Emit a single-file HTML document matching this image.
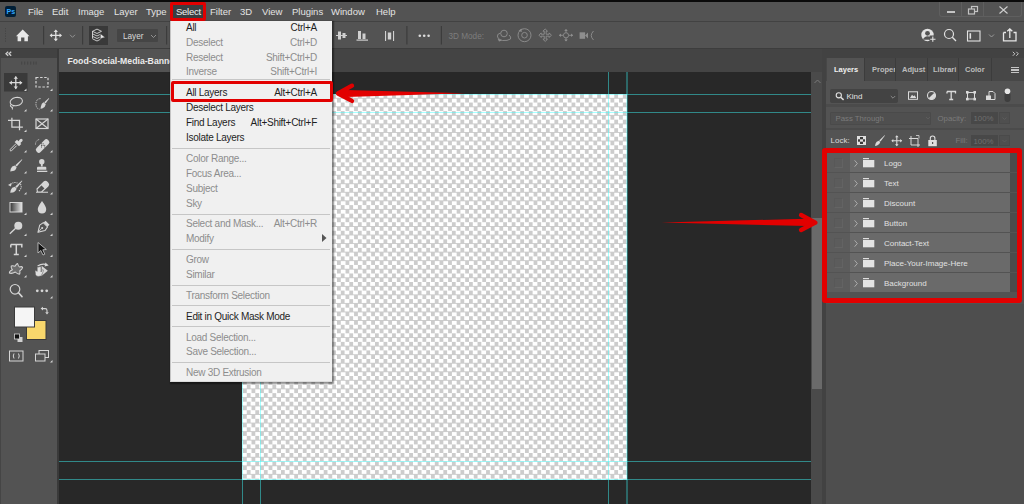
<!DOCTYPE html>
<html><head><meta charset="utf-8">
<style>
*{margin:0;padding:0;box-sizing:border-box}
html,body{width:1024px;height:504px;overflow:hidden;background:#282828;font-family:"Liberation Sans",sans-serif}
.a{position:absolute}
svg{position:absolute;overflow:visible}
#stage{position:relative;width:1024px;height:504px;overflow:hidden}
.mb{position:absolute;font-size:9.5px;color:#e4e4e4;top:6px;line-height:11px;white-space:nowrap}
#menu{position:absolute;left:170px;top:0;width:163px;height:383px}
.mi{position:absolute;left:16px;font-size:10px;line-height:12px;letter-spacing:-0.28px;color:#1e1e1e;white-space:nowrap;margin-top:0.4px}
.sc{position:absolute;right:16px;font-size:10px;line-height:12px;letter-spacing:-0.28px;color:#1e1e1e;white-space:nowrap;text-align:right;margin-top:0.4px}
.d{color:#8d8d8d}
.sep{position:absolute;left:2px;width:158px;height:1px;background:#c6c6c6}
.row{position:absolute;left:827px;width:190px;height:19px;background:#4b4b4b}
.row .v{position:absolute;left:0;top:0;width:23px;height:19px;background:#5c5c5c}
.row .v i{position:absolute;left:6.5px;top:5px;width:9.5px;height:9.5px;border:1px solid;border-color:#585858 #636363 #646464 #585858}
.row .n{position:absolute;left:23px;top:0;width:160px;height:19px;background:#6a6a6a}
.row .n span{position:absolute;left:34px;top:5.5px;font-size:8px;line-height:10px;color:#e0e0e0;white-space:nowrap}
.ptab{position:absolute;top:64.5px;font-size:7.5px;line-height:9px;font-weight:bold;color:#bdbdbd;white-space:nowrap}
.guideh{position:absolute;left:59px;width:752px;height:1px;background:rgba(60,255,255,0.45)}
.guidev{position:absolute;top:72px;height:432px;width:1px;background:rgba(60,255,255,0.45)}
</style></head><body><div id="stage">
<!-- top black strip -->
<div class="a" style="left:0;top:0;width:1024px;height:2px;background:#0a0a0a"></div>
<!-- menu bar -->
<div class="a" style="left:0;top:2px;width:1024px;height:19px;background:#535353"></div>
<div class="a" style="left:0;top:21px;width:1024px;height:1px;background:#424242"></div>
<!-- PS icon -->
<div class="a" style="left:5px;top:6px;width:11px;height:11px;background:#001e36;border-radius:2px"></div>
<div class="a" style="left:6.5px;top:7.5px;font-size:7px;line-height:8px;font-weight:bold;color:#31a8ff">Ps</div>
<div class="mb" style="left:28px">File</div>
<div class="mb" style="left:52px">Edit</div>
<div class="mb" style="left:78px">Image</div>
<div class="mb" style="left:114px">Layer</div>
<div class="mb" style="left:146px">Type</div>
<div class="mb" style="left:210px">Filter</div>
<div class="mb" style="left:240px">3D</div>
<div class="mb" style="left:262px">View</div>
<div class="mb" style="left:292px">Plugins</div>
<div class="mb" style="left:331px">Window</div>
<div class="mb" style="left:376px">Help</div>
<!-- window controls -->
<div class="a" style="left:939px;top:2px;width:83px;height:15px;border:1px solid #5f5f5f;border-top:none;border-radius:0 0 3px 3px"></div>
<div class="a" style="left:961px;top:2px;width:1px;height:14px;background:#5f5f5f"></div>
<div class="a" style="left:983px;top:2px;width:1px;height:14px;background:#5f5f5f"></div>
<div class="a" style="left:947px;top:11px;width:8px;height:2px;background:#c4c4c4"></div>
<svg style="left:968px;top:6px" width="11" height="9"><rect x="3.5" y="0.5" width="6" height="5" fill="none" stroke="#c4c4c4" stroke-width="1.2"/><rect x="0.5" y="3" width="6" height="5" fill="#535353" stroke="#c4c4c4" stroke-width="1.2"/></svg>
<svg style="left:999px;top:6px" width="9" height="8"><path d="M0.5 0.5L8.5 7.5M8.5 0.5L0.5 7.5" stroke="#cfcfcf" stroke-width="1.1"/></svg>

<!-- options bar -->
<div class="a" style="left:0;top:22px;width:1024px;height:26px;background:#535353"></div>
<div class="a" style="left:0;top:48px;width:1024px;height:1px;background:#3d3d3d"></div>

<!-- options bar icons -->
<svg style="left:0;top:0" width="1024" height="50">
<g fill="#454545"><rect x="5" y="28" width="1" height="1.2"/><rect x="5" y="30.5" width="1" height="1.2"/><rect x="5" y="33" width="1" height="1.2"/><rect x="5" y="35.5" width="1" height="1.2"/><rect x="5" y="38" width="1" height="1.2"/><rect x="5" y="40.5" width="1" height="1.2"/></g>
<!-- home -->
<path d="M22.7 29.5 L29.5 36.3 H27.9 V41.2 H24.4 V37.5 H21.1 V41.2 H17.6 V36.3 H16 Z" fill="#e8e8e8"/>
<g fill="#3c3c3c"><rect x="43" y="26" width="1.2" height="18.5"/><rect x="82" y="26" width="1.2" height="18.5"/><rect x="166" y="26" width="1.2" height="18.5"/><rect x="406.3" y="26" width="1.2" height="18.5"/><rect x="440.8" y="26" width="1.2" height="18.5"/></g>
<!-- move -->
<path d="M55.8 30.5V40.3 M50.5 35.4H61.1" stroke="#e0e0e0" stroke-width="1.3" fill="none"/>
<path d="M55.8 29.5L53.6 32H58Z M55.8 41.3L53.6 38.8H58Z M49.6 35.4L52.1 33.2V37.6Z M62 35.4L59.5 33.2V37.6Z" fill="#e0e0e0"/>
<path d="M70 34.8L72.5 37.3L75 34.8" fill="none" stroke="#9a9a9a" stroke-width="0.9"/>
<!-- auto select box -->
<rect x="89" y="26" width="19" height="19" fill="#393939"/>
<g fill="none" stroke="#d8d8d8" stroke-width="0.9">
<path d="M92.5 31.3 L97 29.1 L101.5 31.3 L97 33.5Z"/>
<path d="M92.5 33.8 L97 36 L100 34.5"/>
<path d="M92.5 36.3 L97 38.5 L99.8 37.1"/>
<path d="M92.5 38.8 L97 41 L100 39.5"/>
<path d="M92.5 31 V38.5"/>
</g>
<path d="M100.3 33.6 L105.2 37.4 L101.6 38.2 L100.3 40.3 Z" fill="#e6e6e6" stroke="#393939" stroke-width="0.5"/>
<!-- Layer dropdown -->
<rect x="117" y="29" width="41" height="13" rx="1" fill="#454545"/>
<path d="M151 35L153.5 37.5L156 35" fill="none" stroke="#9a9a9a" stroke-width="0.9"/>
<!-- align icons -->
<g fill="#d0d0d0">
<rect x="336" y="35" width="11" height="1"/><rect x="338" y="31.5" width="3" height="8"/><rect x="342.5" y="33" width="3" height="5"/>
<rect x="356.5" y="39.5" width="11.5" height="1.2"/><rect x="358" y="31" width="3" height="8"/><rect x="362.5" y="33.5" width="3" height="5.5"/>
<rect x="385" y="31" width="1.1" height="10"/><rect x="393" y="31" width="1.1" height="10"/><rect x="387.8" y="32.5" width="3.4" height="7"/>
</g>
<g fill="#dcdcdc"><circle cx="419.8" cy="35.8" r="1.3"/><circle cx="424.2" cy="35.8" r="1.3"/><circle cx="428.6" cy="35.8" r="1.3"/></g>
<!-- 3D icons -->
<g fill="none" stroke="#8e8e8e" stroke-width="0.9">
<circle cx="504" cy="33.5" r="3.3"/>
<path d="M500.5 33 q-4 1 -3 4 q1.5 3 5 3.5 q5 0.5 8 -1.5 q1 -2 -1.5 -4"/>
<circle cx="524.5" cy="35.2" r="6.5"/><circle cx="524.5" cy="35.2" r="2.8"/>
<path d="M544.25 31.20 L542.90 31.20 L545.20 29.00 L547.50 31.20 L546.15 31.20 L546.15 34.25 L549.20 34.25 L549.20 32.90 L551.40 35.20 L549.20 37.50 L549.20 36.15 L546.15 36.15 L546.15 39.20 L547.50 39.20 L545.20 41.40 L542.90 39.20 L544.25 39.20 L544.25 36.15 L541.20 36.15 L541.20 37.50 L539.00 35.20 L541.20 32.90 L541.20 34.25 L544.25 34.25Z"/>
<circle cx="566" cy="35.3" r="2.6"/>
<path d="M559 35.3 H563 M569 35.3 H573 M566 29.5 V32.5 M566 38 V41"/>
<path d="M593.5 31 Q589 35.5 593.5 40"/>
</g>
<g fill="#8e8e8e">
<path d="M497.5 38.5 L502 40.5 L499 41.5Z"/>
<path d="M518.5 31 L521.5 28.5 L521.8 32Z"/>
<path d="M559 35.3 L561 33.5 V37.1Z M573 35.3 L571 33.5 V37.1Z M566 29 L564.2 31 H567.8Z M566 41.5 L564.2 39.5 H567.8Z"/>
<rect x="579.6" y="32.3" width="5.5" height="6.5"/><path d="M585 35.5 L588 32.5 V38.5Z"/>
</g>
<text x="448.5" y="38.7" font-family="Liberation Sans" font-size="8.2" fill="#7d7d7d">3D Mode:</text>
<!-- right icons -->
<g fill="#e2e2e2">
<circle cx="927.5" cy="35" r="6.2"/>
</g>
<g fill="#535353"><circle cx="927.5" cy="33.3" r="2.4"/><path d="M922.8 39.8 q1.5 -3.5 4.7 -3.5 q3.2 0 4.7 3.5Z"/><rect x="929.5" y="35.5" width="7" height="7"/></g>
<path d="M932.8 36.5V41.8M930.2 39.2H935.5" stroke="#e2e2e2" stroke-width="1.1"/>
<circle cx="949" cy="34" r="4.5" fill="none" stroke="#e2e2e2" stroke-width="1.2"/>
<path d="M952.3 37.3L956 41" stroke="#e2e2e2" stroke-width="1.3"/>
<rect x="967.5" y="31" width="12.5" height="10" fill="none" stroke="#e2e2e2" stroke-width="1.1"/>
<rect x="969.5" y="33.2" width="1.6" height="5.5" fill="#e2e2e2"/>
<path d="M989 34.5L991.5 37L994 34.5" fill="none" stroke="#a0a0a0" stroke-width="0.9"/>
<path d="M1003.5 32.5 V40.8 H1016 V32.5 H1013.5 M1006 32.5 H1003.5 M1009.8 38 V29 M1007.3 31.3 L1009.8 28.8 L1012.3 31.3" fill="none" stroke="#e6e6e6" stroke-width="1.3"/>
</svg>
<div class="a" style="left:123px;top:32px;font-size:8.2px;line-height:9px;color:#d8d8d8">Layer</div>

<!-- toolbar -->
<div class="a" style="left:0;top:49px;width:57px;height:455px;background:#535353"></div>
<div class="a" style="left:0;top:49px;width:1px;height:455px;background:#454545"></div>
<div class="a" style="left:0;top:49px;width:57px;height:9px;background:#424242"></div>
<div class="a" style="left:57px;top:49px;width:2px;height:455px;background:#3a3a3a"></div>

<!-- toolbar icons -->
<svg style="left:0;top:0" width="60" height="504">
<g fill="#b5b5b5">

</g>
<path d="M8.2 51.8 L6 53.8 L8.2 55.8 M11.2 51.8 L9 53.8 L11.2 55.8" fill="none" stroke="#d0d0d0" stroke-width="1.3"/>
<g fill="#474747"><rect x="21" y="61.6" width="1.3" height="3"/><rect x="24" y="61.6" width="1.3" height="3"/><rect x="27" y="61.6" width="1.3" height="3"/><rect x="30" y="61.6" width="1.3" height="3"/><rect x="33" y="61.6" width="1.3" height="3"/><rect x="35.5" y="61.6" width="1.3" height="3"/></g>
<rect x="4" y="73" width="23.5" height="18.5" fill="#3a3a3a"/>
<g fill="#d6d6d6">
<!-- corner triangles -->
<path d="M26.5 88.5V91H24Z"/><path d="M52.5 88.5V91H50Z"/>
<path d="M26.5 109V111.5H24Z"/><path d="M52.5 109V111.5H50Z"/>
<path d="M26.5 129.5V132H24Z"/>
<path d="M26.5 150V152.5H24Z"/><path d="M52.5 150V152.5H50Z"/>
<path d="M26.5 171V173.5H24Z"/><path d="M52.5 171V173.5H50Z"/>
<path d="M26.5 192V194.5H24Z"/><path d="M52.5 192V194.5H50Z"/>
<path d="M26.5 212.5V215H24Z"/><path d="M52.5 212.5V215H50Z"/>
<path d="M26.5 233.5V236H24Z"/><path d="M52.5 233.5V236H50Z"/>
<path d="M26.5 254.5V257H24Z"/><path d="M52.5 254.5V257H50Z"/>
<path d="M26.5 275V277.5H24Z"/><path d="M52.5 275V277.5H50Z"/>
<path d="M52.5 296V298.5H50Z"/>
<path d="M52.5 360V362.5H50Z"/>
</g>
<g fill="none" stroke="#dadada" stroke-width="1.3" stroke-linecap="round" stroke-linejoin="round">
<!-- move -->
<path d="M15.8 77V88.5 M10 82.7H21.6"/>
</g>
<g fill="#dadada">
<path d="M15.8 76.3L13.6 78.8H18Z M15.8 89.1L13.6 86.6H18Z M9.4 82.7L11.9 80.5V84.9Z M22.2 82.7L19.7 80.5V84.9Z"/>
</g>
<g fill="none" stroke="#d6d6d6" stroke-width="1.2">
<!-- marquee dashed -->
<rect x="36" y="77.5" width="12" height="9.5" stroke-dasharray="2.5 1.6"/>
<!-- lasso -->
<ellipse cx="16.3" cy="101.6" rx="6.2" ry="4.1" transform="rotate(-12 16.3 101.6)" stroke-width="1.05"/>
<path d="M11 104.5 q-1.5 1.5 0.2 2.6 q1.5 0.8 2.2 -0.4 M11.8 106.5 q0.8 1.5 0.6 3" stroke-width="1"/>
<!-- object select -->
<path d="M40.5 98.6 q-4.3 0.2 -4.6 5.2 q0.2 4.8 3.6 5.4" stroke-dasharray="1.1 0.9" stroke-width="1"/>
<!-- crop -->
<path d="M11.9 117.8V127.2H22.9 M8 120.4H19.5V130.2" stroke-width="1.25"/>
<!-- frame -->
<rect x="36" y="119" width="12" height="9.5"/>
<path d="M36 119L48 128.5M48 119L36 128.5"/>
</g>
<g fill="#d6d6d6">
<!-- object select brush -->
<path d="M48.9 98 L49.2 98.4 L45.6 103.6 L44.2 102.3 Z"/><path d="M43.6 102.2 L45.8 104.2 q-0.6 3.2 -3.6 4.4 L40.5 108.8 L40.9 106.6 q0.5 -3.6 2.7 -4.4Z"/>
</g>
<!-- eyedropper -->
<path d="M16 143.6 L10.3 149.3 q-0.6 1.4 0.8 1.9 L16.7 145.6" fill="none" stroke="#d6d6d6" stroke-width="1" stroke-linejoin="round"/>
<g fill="#d6d6d6">
<path d="M17.8 142 L20 139.3 q1.3 -1.2 2.3 0 q1 1 -0.2 2.2 L19.4 143.8 Z"/>
<path d="M14.6 142 L17 139.8 L21.3 144.1 L19 146.3 Z"/>
<!-- healing bandage -->
<path d="M36.6 148 L44.5 140 q1.8 -1.8 3.6 0 L48.6 140.5 q1.8 1.8 0 3.6 L40.6 152 q-1.8 1.8 -3.6 0 L36.6 151.6 q-1.8 -1.8 0 -3.6Z"/>
</g>
<g fill="#535353"><rect x="41" y="143.3" width="1" height="1"/><rect x="42.6" y="144.9" width="1" height="1"/><rect x="42.6" y="143.3" width="1" height="1"/><rect x="41" y="144.9" width="1" height="1"/><rect x="44.2" y="146.5" width="1" height="1"/><rect x="39.4" y="141.7" width="1" height="1"/><rect x="44.2" y="144.9" width="1" height="1"/><rect x="41" y="146.5" width="1" height="1"/></g>
<path d="M35.5 144.5 q0 -4.5 4.5 -5.2" fill="none" stroke="#cfcfcf" stroke-width="0.9" stroke-dasharray="1 0.9"/>
<g fill="#d6d6d6">
<!-- brush -->
<path d="M21.9 159.3 L22.3 159.8 L16.8 166.6 L15.3 165.2 Z"/>
<path d="M14.9 165.5 L16.6 167.2 q-0.8 3.3 -3.8 3.9 L10.2 171.5 L10.8 168.8 q0.8 -2.8 4.1 -3.3Z"/>
<!-- stamp -->
<circle cx="41.8" cy="161.8" r="2.7"/><rect x="40.9" y="163.5" width="1.8" height="3"/><path d="M37 169.8 V167.8 q0 -1 1 -1 h7.3 q1 0 1 1 V169.8Z"/><rect x="37" y="170.7" width="10.3" height="1.3"/>
<!-- history brush -->
<path d="M21.9 180.6 L22.3 181.1 L16.8 187.9 L15.3 186.5 Z"/>
<path d="M14.9 186.8 L16.6 188.5 q-0.8 3.3 -3.8 3.9 L10.2 192.8 L10.8 190.1 q0.8 -2.8 4.1 -3.3Z"/>
<path d="M8 185 L11.5 183 L11 186.5Z"/>
</g>
<g fill="none" stroke="#d6d6d6" stroke-width="1.1">
<path d="M10.5 184.5 q3 -3 7 -1.5" stroke-dasharray="1.2 1"/>
<path d="M20.5 184 q2 4 -1.5 7" stroke-dasharray="1.2 1"/>
<!-- eraser -->
<path d="M37 189 L44 182 q1.5 -1.3 2.8 0 L48 183.2 q1.3 1.4 0 2.8 L41.5 192 H37.5 Z M36 192.3H48"/>
</g>
<path d="M44 182 q1.5 -1.3 2.8 0 L48 183.2 q1.3 1.4 0 2.8 L45 189 L41 185Z" fill="#d6d6d6"/>
<!-- gradient -->
<defs><linearGradient id="gr" x1="0" x2="1" y1="0" y2="0"><stop offset="0" stop-color="#333"/><stop offset="1" stop-color="#e8e8e8"/></linearGradient></defs>
<rect x="10" y="202.5" width="12" height="9.5" fill="url(#gr)" stroke="#d6d6d6" stroke-width="1"/>
<g fill="#d6d6d6">
<!-- drop -->
<path d="M42 201 Q46.5 207 46.2 209.5 Q46 213.4 42 213.4 Q38 213.4 37.8 209.5 Q37.5 207 42 201Z"/>
<!-- dodge -->
<circle cx="18.3" cy="225.8" r="4"/>
<path d="M15.6 228.3 L9.8 233.8" stroke="#d6d6d6" stroke-width="1.3" fill="none"/>
</g>
<g fill="none" stroke="#d6d6d6" stroke-width="1.1" stroke-linejoin="round">
<!-- pen -->
</g>
<g transform="translate(42.6 227.6) rotate(45)">
<rect x="-2.8" y="-7" width="5.6" height="2.6" fill="#d6d6d6"/>
<path d="M-3 -4 L3 -4 L3.8 0.3 L0 6.6 L-3.8 0.3 Z" fill="none" stroke="#d6d6d6" stroke-width="1.05" stroke-linejoin="round"/>
<path d="M0 6 V1.5" stroke="#d6d6d6" stroke-width="0.9"/><circle cx="0" cy="0.6" r="1" fill="#d6d6d6"/>
</g>
<!-- Type T -->
<path d="M10.8 244.5H21.8V247.5 M10.8 244.5V247.5 M16.3 244.5V254.6 M13.8 254.6H18.8" fill="none" stroke="#d6d6d6" stroke-width="1.5"/>
<!-- path select arrow -->
<path d="M38 242.5 L38 253 L40.8 250.5 L43 255 L44.8 254.2 L42.8 249.8 L46.3 249.5 Z" fill="#111" stroke="#cfcfcf" stroke-width="0.8" stroke-linejoin="round"/>
<!-- custom shape -->
<path d="M17.6 263.5 Q18.3 266.6 19.6 267 Q21.8 266 22.6 267.5 Q22.2 269.3 19.8 270.8 Q20.2 273.2 19.6 274.1 Q17.5 274.2 15.3 272 Q12 274 9.4 273.1 Q9.2 271 12.4 269.8 Q10.8 267.6 11.2 266 Q13 265.6 15 266.2 Q16.5 263.7 17.6 263.5Z" fill="#6e6e6e" stroke="#d6d6d6" stroke-width="1.05" stroke-linejoin="round"/>
<!-- rotate view hand -->
<path d="M37.6 266 q4 -2.6 8 -1.6" fill="none" stroke="#d6d6d6" stroke-width="1.1"/>
<path d="M45.4 262.6 L48.7 265.6 L44.6 266.4Z" fill="#d6d6d6"/>
<path d="M41.6 265.8 L47.8 270.7 L41.2 276.2 Z" fill="#d6d6d6"/>
<path d="M35 270.6 q1 -0.6 2.2 0.8 L37.2 267.2 q0.9 -1 1.8 0 L39.2 266.8 q0.9 -1 1.8 0 V272 L42.6 269.6 q1 0 0.8 1.2 L41.8 275 q-0.8 1.4 -3 1.4 H38 q-1.8 0 -2.5 -1.6 Z" fill="#dedede" stroke="#535353" stroke-width="0.5"/>
<!-- zoom -->
<circle cx="15" cy="289.3" r="4.8" fill="none" stroke="#d6d6d6" stroke-width="1.2"/>
<path d="M18.5 292.8 L22 296.6" stroke="#d6d6d6" stroke-width="1.6" stroke-linecap="round"/>
<!-- more -->
<g fill="#d6d6d6"><circle cx="37.3" cy="290.8" r="1.4"/><circle cx="42" cy="290.8" r="1.4"/><circle cx="46.7" cy="290.8" r="1.4"/></g>
<!-- swatches -->
<rect x="26.5" y="320.5" width="19.5" height="19" fill="#f8d76c" stroke="#3a3a3a" stroke-width="1"/>
<rect x="14.5" y="307" width="20" height="20" fill="#f5f5f5" stroke="#3a3a3a" stroke-width="1"/>
<path d="M42.5 308.6 H45.2 q1.8 0 1.8 1.8 V312.6" fill="none" stroke="#d6d6d6" stroke-width="1.1"/><path d="M40.6 308.6 L43 306.8 V310.4Z M47 314.6 L45.2 312.2 H48.8Z" fill="#d6d6d6"/>
<rect x="17.5" y="337" width="5" height="5" fill="#d0d0d0"/>
<rect x="14.5" y="334" width="5" height="5" fill="#111" stroke="#d6d6d6" stroke-width="0.8"/>
<!-- quick mask -->
<rect x="9.5" y="351" width="13.5" height="10" fill="none" stroke="#d6d6d6" stroke-width="1"/>
<path d="M14 353.5 q-1.5 2.5 0 5 M18.5 353.5 q1.5 2.5 0 5" fill="none" stroke="#d6d6d6" stroke-width="1"/>
<!-- screen mode -->
<rect x="39" y="350.5" width="9.5" height="7" fill="none" stroke="#d6d6d6" stroke-width="1"/>
<rect x="35.5" y="354" width="9.5" height="7" fill="#535353" stroke="#d6d6d6" stroke-width="1"/>
</svg>

<!-- tab bar -->
<div class="a" style="left:59px;top:49px;width:764px;height:23px;background:#444444"></div>
<div class="a" style="left:59px;top:49px;width:160px;height:23px;background:#535353"></div>
<div class="a" style="left:67.5px;top:56px;font-size:8.7px;line-height:10px;font-weight:bold;color:#ececec;white-space:nowrap">Food-Social-Media-Banner.psd @ 66.7%</div>

<!-- canvas area -->
<div class="a" style="left:59px;top:72px;width:752px;height:432px;background:#282828"></div>
<div class="a" style="left:242px;top:94px;width:385px;height:385.5px;background:repeating-conic-gradient(#ffffff 0 25%,#cccccc 0 50%) 4.78px 0/8.56px 8.56px"></div>
<div class="guideh" style="top:94px"></div>
<div class="guideh" style="top:112px"></div>
<div class="guideh" style="top:461px"></div>
<div class="guideh" style="top:479px"></div>
<div class="guidev" style="left:242px"></div>
<div class="guidev" style="left:260px"></div>
<div class="guidev" style="left:608px"></div>
<div class="guidev" style="left:626px;width:2px;background:rgba(60,255,255,0.3)"></div>

<!-- scrollbar -->
<div class="a" style="left:811px;top:72px;width:11px;height:432px;background:#4a4a4a"></div>
<div class="a" style="left:812px;top:218px;width:10px;height:171px;background:#6a6a6a"></div>
<svg style="left:814px;top:79px" width="7" height="5"><path d="M0.5 4L3.5 1L6.5 4" fill="none" stroke="#7a7a7a" stroke-width="1"/></svg>
<div class="a" style="left:822px;top:49px;width:4px;height:455px;background:#424242"></div>

<!-- right panel -->
<div class="a" style="left:826px;top:49px;width:198px;height:455px;background:#4e4e4e"></div>
<div class="a" style="left:826px;top:49px;width:198px;height:9px;background:#424242"></div>
<svg style="left:1012px;top:51px" width="8" height="6"><path d="M0.8 0.8L2.8 2.8L0.8 4.8M4.3 0.8L6.3 2.8L4.3 4.8" fill="none" stroke="#c8c8c8" stroke-width="1"/></svg>
<div class="a" style="left:826px;top:58px;width:198px;height:23px;background:#474747"></div>
<div class="a" style="left:827px;top:58px;width:37px;height:23px;background:#535353"></div>
<div class="a" style="left:864px;top:58px;width:1px;height:23px;background:#3c3c3c"></div>
<div class="a" style="left:895px;top:58px;width:1px;height:23px;background:#3c3c3c"></div>
<div class="a" style="left:927px;top:58px;width:1px;height:23px;background:#3c3c3c"></div>
<div class="a" style="left:958px;top:58px;width:1px;height:23px;background:#3c3c3c"></div>
<div class="a" style="left:991px;top:58px;width:1px;height:23px;background:#3c3c3c"></div>
<div class="ptab" style="left:834px;color:#f0f0f0">Layers</div>
<div class="ptab" style="left:872px;width:23px;overflow:hidden">Properties</div>
<div class="ptab" style="left:902px">Adjust</div>
<div class="ptab" style="left:933px;width:24.5px;overflow:hidden">Librari</div>
<div class="ptab" style="left:965px">Color</div>
<div class="a" style="left:1010.5px;top:66.6px;width:8.5px;height:1.6px;background:#c4c4c4"></div>
<div class="a" style="left:1010.5px;top:69.1px;width:8.5px;height:1.6px;background:#c4c4c4"></div>
<div class="a" style="left:1010.5px;top:71.6px;width:8.5px;height:1.6px;background:#c4c4c4"></div>
<div class="a" style="left:826px;top:81px;width:198px;height:223px;background:#535353"></div>

<!-- panel controls -->
<div class="a" style="left:826px;top:104px;width:198px;height:3px;background:#4b4b4b"></div>
<div class="a" style="left:826px;top:128px;width:198px;height:2px;background:#4b4b4b"></div>
<div class="a" style="left:830px;top:89px;width:68px;height:13.5px;background:#434343;border-radius:2px"></div>
<div class="a" style="left:846.5px;top:92px;font-size:8px;line-height:9px;color:#e2e2e2">Kind</div>
<div class="a" style="left:830px;top:112px;width:101px;height:12.5px;background:#4f4f4f;border:1px solid #4a4a4a;border-radius:1px"></div>
<div class="a" style="left:835.5px;top:114px;font-size:7.8px;line-height:9px;color:#7b7b7b;white-space:nowrap">Pass Through</div>
<div class="a" style="left:937.5px;top:114px;font-size:7.8px;line-height:9px;color:#7b7b7b;white-space:nowrap">Opacity:</div>
<div class="a" style="left:971px;top:112px;width:27px;height:12px;background:#484848"></div>
<div class="a" style="left:999px;top:112px;width:11px;height:12px;background:#4f4f4f;border:1px solid #4a4a4a"></div>
<div class="a" style="left:973.5px;top:114px;font-size:7.8px;line-height:9px;color:#6f6f6f;white-space:nowrap">100%</div>
<div class="a" style="left:830.5px;top:136px;font-size:8px;line-height:9px;color:#dadada;white-space:nowrap">Lock:</div>
<div class="a" style="left:955.5px;top:136px;font-size:7.8px;line-height:9px;color:#7b7b7b;white-space:nowrap">Fill:</div>
<div class="a" style="left:971px;top:135px;width:27px;height:11px;background:#484848"></div>
<div class="a" style="left:999px;top:135px;width:11px;height:11px;background:#4f4f4f;border:1px solid #4a4a4a"></div>
<div class="a" style="left:973.5px;top:137px;font-size:7.8px;line-height:9px;color:#6f6f6f;white-space:nowrap">100%</div>
<svg style="left:0;top:0" width="1024" height="160">
<!-- kind search -->
<circle cx="838.8" cy="95.3" r="2.6" fill="none" stroke="#e0e0e0" stroke-width="1.1"/>
<path d="M840.7 97.2L843.6 99.9" stroke="#e0e0e0" stroke-width="1.5"/>
<path d="M890.8 96L893 98.2L895.2 96" fill="none" stroke="#9a9a9a" stroke-width="0.8"/>
<path d="M926 117L928 119L930 117" fill="none" stroke="#5f5f5f" stroke-width="0.8"/>
<path d="M1002.5 117.5L1004.5 119.5L1006.5 117.5" fill="none" stroke="#5f5f5f" stroke-width="0.8"/>
<path d="M1002.5 140L1004.5 142L1006.5 140" fill="none" stroke="#5f5f5f" stroke-width="0.8"/>
<!-- filter icons -->
<rect x="908.5" y="91.8" width="9" height="7.5" fill="none" stroke="#dadada" stroke-width="1"/>
<path d="M910 98 L912 94.8 L913.5 96.3 L914.5 95.2 L916.3 98Z" fill="#dadada"/>
<circle cx="931.5" cy="95.5" r="4" fill="none" stroke="#dadada" stroke-width="1.1"/>
<path d="M931.5 91.5 A4 4 0 0 1 931.5 99.5 Z" fill="#dadada" transform="rotate(45 931.5 95.5)"/>
<path d="M947 91.5H955.5V93.5 M947 91.5V93.5 M951.2 91.5V99.5 M949.2 99.5H953.2" fill="none" stroke="#dadada" stroke-width="1.3"/>
<rect x="967.5" y="92.5" width="7" height="6.5" fill="none" stroke="#dadada" stroke-width="1"/>
<g fill="#dadada"><rect x="966" y="91" width="2.6" height="2.6"/><rect x="973.4" y="91" width="2.6" height="2.6"/><rect x="966" y="97.8" width="2.6" height="2.6"/><rect x="973.4" y="97.8" width="2.6" height="2.6"/></g>
<path d="M989 91.5 H993 L995 93.5 V99.5 H989Z" fill="none" stroke="#dadada" stroke-width="1"/>
<rect x="986" y="95.5" width="5" height="4.5" fill="#dadada"/>
<rect x="1004.5" y="92" width="6" height="10" rx="3" fill="#3e3e3e"/>
<circle cx="1007.5" cy="91.3" r="2.8" fill="#e6e6e6"/>
<!-- lock icons -->
<rect x="857" y="136" width="9" height="9" fill="#e0e0e0"/>
<g fill="#3a3a3a"><rect x="860" y="137" width="3" height="2.3"/><rect x="858" y="139.3" width="2" height="2.4"/><rect x="863" y="139.3" width="2" height="2.4"/><rect x="860" y="141.7" width="3" height="2.3"/></g>
<path d="M884.6 135.2 L885 135.6 L880.5 141.6 L879.2 140.4 Z" fill="#dadada"/>
<path d="M878.9 140.7 L880.3 142.1 q-0.7 2.8 -3.2 3.3 L875 146 L875.5 143.7 q0.7 -2.4 3.4 -3Z" fill="#dadada"/>
<path d="M896.8 136V145.5 M892 140.8H901.5" stroke="#dadada" stroke-width="1.1"/>
<path d="M896.8 135.3L895 137.3H898.6Z M896.8 146.2L895 144.2H898.6Z M891.3 140.8L893.3 139V142.6Z M902.2 140.8L900.2 139V142.6Z" fill="#dadada"/>
<path d="M911 136 V145 H920 M909 138.5 H918 V147" fill="none" stroke="#dadada" stroke-width="1"/>
<path d="M916 135.5 L919 135.5 L919 138.5" fill="none" stroke="#dadada" stroke-width="0.8"/>
<rect x="928.3" y="140" width="8.5" height="6.2" fill="#e0e0e0"/>
<path d="M930.3 140 V138.3 q0 -2.3 2.3 -2.3 q2.3 0 2.3 2.3 V140" fill="none" stroke="#e0e0e0" stroke-width="1.1"/>
<rect x="932" y="142" width="1.2" height="2" fill="#535353"/>
</svg>

<!-- layer rows -->
<div class="row" style="top:153px"><div class="v"><i></i></div><div class="n"><svg style="left:4px;top:7px" width="5" height="8"><path d="M0.6 0.3L3.3 3.5L0.6 6.7" fill="none" stroke="#bdbdbd" stroke-width="0.8"/></svg><svg style="left:13px;top:5px" width="12" height="10"><rect x="0" y="0" width="6" height="1.2" fill="#dedede"/><rect x="0" y="2" width="11.3" height="7.3" fill="#e4e4e4"/></svg><span>Logo</span></div></div>
<div class="row" style="top:173px"><div class="v"><i></i></div><div class="n"><svg style="left:4px;top:7px" width="5" height="8"><path d="M0.6 0.3L3.3 3.5L0.6 6.7" fill="none" stroke="#bdbdbd" stroke-width="0.8"/></svg><svg style="left:13px;top:5px" width="12" height="10"><rect x="0" y="0" width="6" height="1.2" fill="#dedede"/><rect x="0" y="2" width="11.3" height="7.3" fill="#e4e4e4"/></svg><span>Text</span></div></div>
<div class="row" style="top:193px"><div class="v"><i></i></div><div class="n"><svg style="left:4px;top:7px" width="5" height="8"><path d="M0.6 0.3L3.3 3.5L0.6 6.7" fill="none" stroke="#bdbdbd" stroke-width="0.8"/></svg><svg style="left:13px;top:5px" width="12" height="10"><rect x="0" y="0" width="6" height="1.2" fill="#dedede"/><rect x="0" y="2" width="11.3" height="7.3" fill="#e4e4e4"/></svg><span>Discount</span></div></div>
<div class="row" style="top:213px"><div class="v"><i></i></div><div class="n"><svg style="left:4px;top:7px" width="5" height="8"><path d="M0.6 0.3L3.3 3.5L0.6 6.7" fill="none" stroke="#bdbdbd" stroke-width="0.8"/></svg><svg style="left:13px;top:5px" width="12" height="10"><rect x="0" y="0" width="6" height="1.2" fill="#dedede"/><rect x="0" y="2" width="11.3" height="7.3" fill="#e4e4e4"/></svg><span>Button</span></div></div>
<div class="row" style="top:233px"><div class="v"><i></i></div><div class="n"><svg style="left:4px;top:7px" width="5" height="8"><path d="M0.6 0.3L3.3 3.5L0.6 6.7" fill="none" stroke="#bdbdbd" stroke-width="0.8"/></svg><svg style="left:13px;top:5px" width="12" height="10"><rect x="0" y="0" width="6" height="1.2" fill="#dedede"/><rect x="0" y="2" width="11.3" height="7.3" fill="#e4e4e4"/></svg><span>Contact-Text</span></div></div>
<div class="row" style="top:253px"><div class="v"><i></i></div><div class="n"><svg style="left:4px;top:7px" width="5" height="8"><path d="M0.6 0.3L3.3 3.5L0.6 6.7" fill="none" stroke="#bdbdbd" stroke-width="0.8"/></svg><svg style="left:13px;top:5px" width="12" height="10"><rect x="0" y="0" width="6" height="1.2" fill="#dedede"/><rect x="0" y="2" width="11.3" height="7.3" fill="#e4e4e4"/></svg><span>Place-Your-Image-Here</span></div></div>
<div class="row" style="top:273px"><div class="v"><i></i></div><div class="n"><svg style="left:4px;top:7px" width="5" height="8"><path d="M0.6 0.3L3.3 3.5L0.6 6.7" fill="none" stroke="#bdbdbd" stroke-width="0.8"/></svg><svg style="left:13px;top:5px" width="12" height="10"><rect x="0" y="0" width="6" height="1.2" fill="#dedede"/><rect x="0" y="2" width="11.3" height="7.3" fill="#e4e4e4"/></svg><span>Background</span></div></div>

<!-- dropdown menu -->
<div class="a" style="left:170px;top:21px;width:161.5px;height:361px;background:#f0f0f0;border-left:1px solid #c4c4c4;border-bottom:1px solid #dcdcdc;box-shadow:1px 1px 1.2px 0.6px rgba(0,0,0,0.42)"></div>
<div id="menu">
<div class="mi" style="top:21.4px">All</div>
<div class="sc" style="top:21.4px">Ctrl+A</div>
<div class="mi d" style="top:36.6px">Deselect</div>
<div class="sc d" style="top:36.6px">Ctrl+D</div>
<div class="mi d" style="top:51.7px">Reselect</div>
<div class="sc d" style="top:51.7px">Shift+Ctrl+D</div>
<div class="mi d" style="top:66.1px">Inverse</div>
<div class="sc d" style="top:66.1px">Shift+Ctrl+I</div>
<div class="sep" style="top:79px"></div>
<div class="mi" style="top:86.6px">All Layers</div>
<div class="sc" style="top:86.6px">Alt+Ctrl+A</div>
<div class="mi" style="top:101.7px">Deselect Layers</div>
<div class="mi" style="top:117.1px">Find Layers</div>
<div class="sc" style="top:117.1px">Alt+Shift+Ctrl+F</div>
<div class="mi" style="top:131.4px">Isolate Layers</div>
<div class="sep" style="top:148px"></div>
<div class="mi d" style="top:152.3px">Color Range...</div>
<div class="mi d" style="top:167.5px">Focus Area...</div>
<div class="mi d" style="top:182.6px">Subject</div>
<div class="mi d" style="top:197.6px">Sky</div>
<div class="sep" style="top:214px"></div>
<div class="mi d" style="top:218.0px">Select and Mask...</div>
<div class="sc d" style="top:218.0px">Alt+Ctrl+R</div>
<div class="mi d" style="top:232.7px">Modify</div>
<div class="sep" style="top:249px"></div>
<div class="mi d" style="top:253.7px">Grow</div>
<div class="mi d" style="top:269.0px">Similar</div>
<div class="sep" style="top:285px"></div>
<div class="mi d" style="top:289.6px">Transform Selection</div>
<div class="sep" style="top:305px"></div>
<div class="mi" style="top:310.4px">Edit in Quick Mask Mode</div>
<div class="sep" style="top:326px"></div>
<div class="mi d" style="top:331.3px">Load Selection...</div>
<div class="mi d" style="top:345.5px">Save Selection...</div>
<div class="sep" style="top:362px"></div>
<div class="mi d" style="top:366.6px">New 3D Extrusion</div>
<svg style="left:152px;top:234px" width="5" height="8"><path d="M0 0L4.5 4L0 8Z" fill="#555"/></svg>
</div>

<!-- red highlights -->
<div class="a" style="left:170px;top:2px;width:36px;height:19px;border:3px solid #e20000;border-radius:2px;background:#3b3e40"></div>
<div class="mb" style="left:176px;color:#f2f2f2;letter-spacing:-0.25px">Select</div>
<div class="a" style="left:171px;top:80.7px;width:161.5px;height:21.4px;border:3.6px solid #e20000;border-radius:2px"></div>
<div class="a" style="left:822px;top:148px;width:200px;height:155px;border:5px solid #e20000;border-radius:3px"></div>

<!-- arrows -->
<svg style="left:0;top:0" width="1024" height="504">
<path d="M465.5 93.2 L346 89.9 L346 97.1 Z" fill="#e20000"/>
<path d="M352 85.7 L338 93.5 L352 100.9 L348.3 97 L348.3 90 Z" fill="#e20000"/>
<path d="M352 85.7 L338 93.5 L352 100.9" fill="none" stroke="#e20000" stroke-width="4.4" stroke-linecap="round" stroke-linejoin="round"/>
<path d="M661.5 222.4 L807 218.8 L807 226.1 Z" fill="#e20000"/>
<path d="M801.1 215 L815.4 222.6 L801.1 230 L804.8 226 L804.8 219 Z" fill="#e20000"/>
<path d="M801.1 215 L815.4 222.6 L801.1 230" fill="none" stroke="#e20000" stroke-width="4.4" stroke-linecap="round" stroke-linejoin="round"/>
</svg>
</div></body></html>
